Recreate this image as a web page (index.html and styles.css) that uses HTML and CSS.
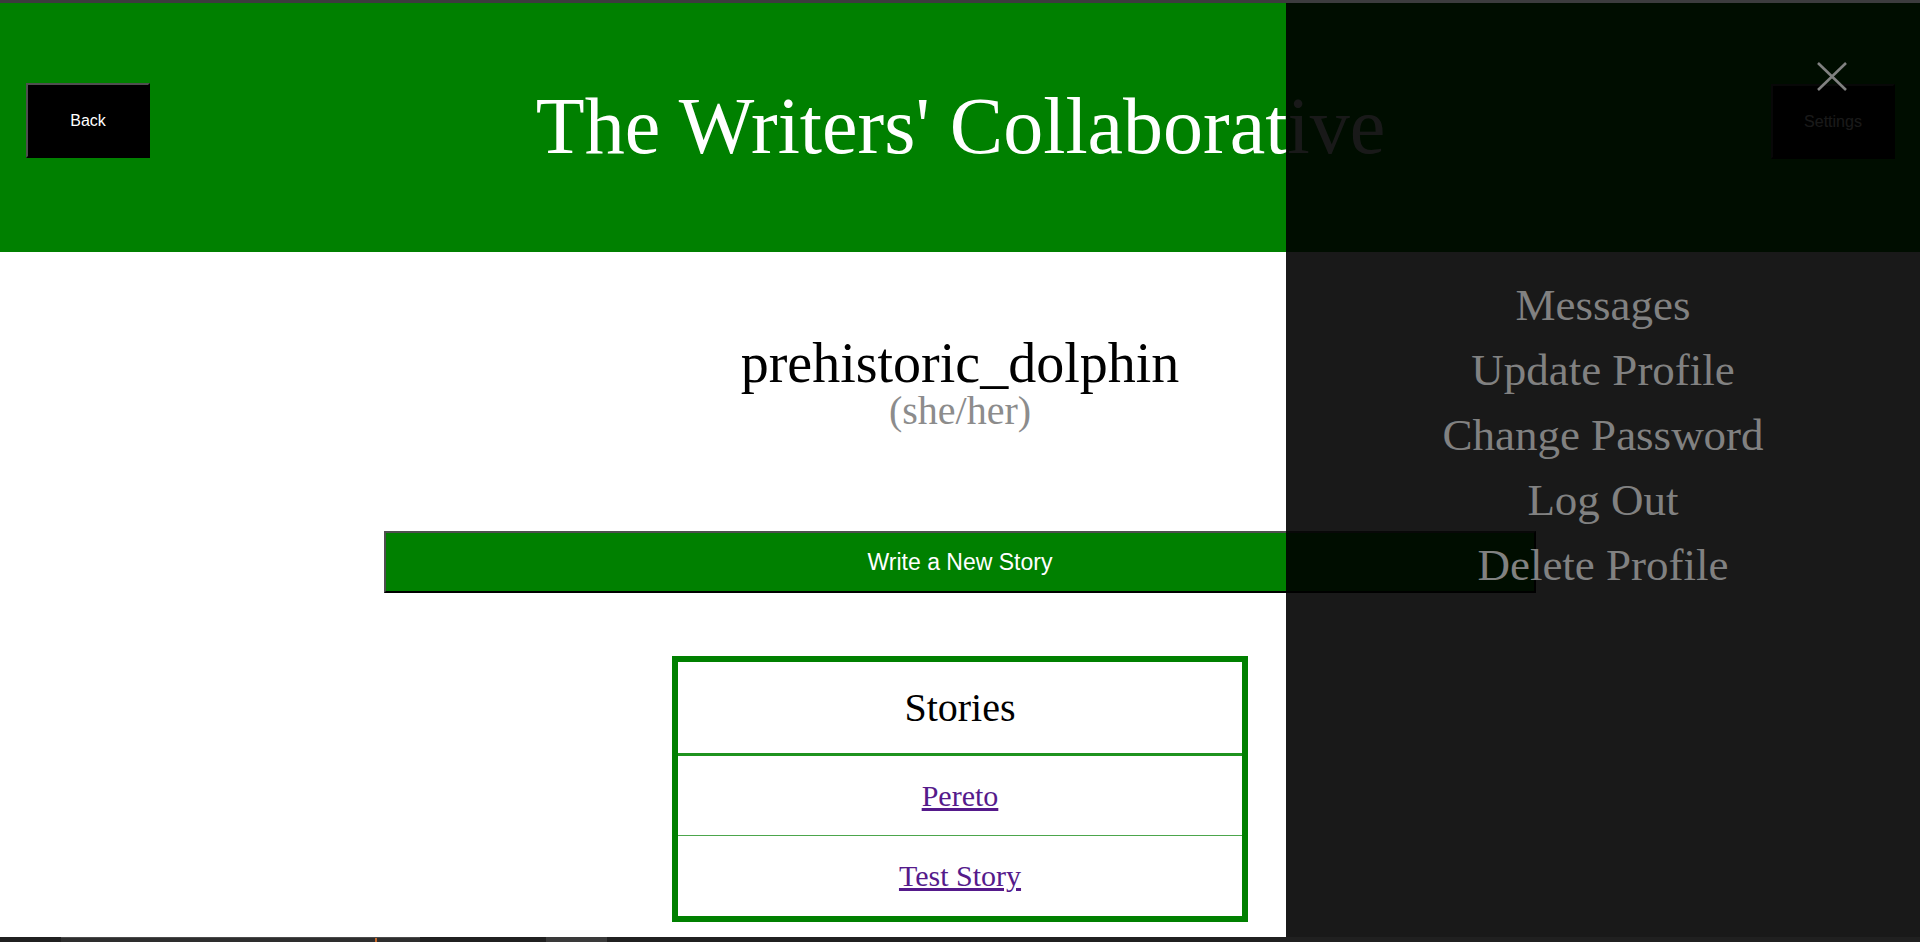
FILE: index.html
```html
<!DOCTYPE html>
<html lang="en">
<head>
<meta charset="utf-8">
<title>The Writers' Collaborative</title>
<link rel="stylesheet" href="styles.css">
</head>
<body>
<div class="chrome-top"></div>
<div class="viewport">
  <header class="header">
    <button class="btn btn-back">Back</button>
    <h1 class="title">The Writers' Collaborative</h1>
    <button class="btn btn-settings">Settings</button>
  </header>
  <main class="main">
    <div class="profile">
      <div class="username">prehistoric_dolphin</div>
      <div class="pronouns">(she/her)</div>
    </div>
    <button class="write-btn">Write a New Story</button>
    <table class="stories">
      <thead>
        <tr><th class="stories-head">Stories</th></tr>
      </thead>
      <tbody>
        <tr><td class="story-cell story-first"><a class="story-link" href="#">Pereto</a></td></tr>
        <tr><td class="story-cell story-last"><a class="story-link" href="#">Test Story</a></td></tr>
      </tbody>
    </table>
  </main>
  <nav class="sidenav">
    <a class="close-btn" href="#" aria-label="Close">
      <svg class="close-icon" viewBox="0 0 30 29" width="30" height="29">
        <line x1="1" y1="1" x2="29" y2="28" stroke="#818181" stroke-width="2.6"/>
        <line x1="29" y1="1" x2="1" y2="28" stroke="#818181" stroke-width="2.6"/>
      </svg>
    </a>
    <a class="nav-link" href="#">Messages</a>
    <a class="nav-link" href="#">Update Profile</a>
    <a class="nav-link" href="#">Change Password</a>
    <a class="nav-link" href="#">Log Out</a>
    <a class="nav-link" href="#">Delete Profile</a>
  </nav>
</div>
<div class="taskbar">
  <div class="task-gap-a"></div>
  <div class="task-item"><span class="task-mark"></span></div>
  <div class="task-gap-b"></div>
  <div class="task-small"></div>
</div>
</body>
</html>
```

FILE: styles.css
```css
html, body {
  margin: 0;
  padding: 0;
}

body {
  width: 1920px;
  height: 942px;
  overflow: hidden;
  background: #ffffff;
  font-family: "Liberation Serif", "Times New Roman", serif;
  display: flex;
  flex-direction: column;
}

.chrome-top {
  height: 3px;
  flex: none;
  background: #3c3c3e;
}

.viewport {
  position: relative;
  height: 934px;
  flex: none;
  overflow: hidden;
  background: #ffffff;
}

.header {
  height: 249px;
  background: #008000;
  display: grid;
  grid-template-columns: 1fr auto 1fr;
  align-items: center;
  padding: 0 25px 0 26px;
}

.btn {
  width: 124px;
  height: 75px;
  box-sizing: border-box;
  background: #000000;
  color: #ffffff;
  font-family: "Liberation Sans", Arial, sans-serif;
  font-size: 16px;
  border-style: solid;
  border-width: 2px;
  border-color: #4f4f4f #000000 #000000 #4f4f4f;
  padding: 0;
  align-self: start;
  margin-top: 80px;
}

.btn-back {
  justify-self: start;
}

.btn-settings {
  justify-self: end;
  margin-top: 81px;
}

.title {
  margin: 0 0 2px 0;
  font-size: 80px;
  font-weight: normal;
  color: #ffffff;
  line-height: normal;
  white-space: nowrap;
}

.main {
  display: flex;
  flex-direction: column;
  align-items: center;
}

.profile {
  margin-top: 83px;
  display: flex;
  flex-direction: column;
  align-items: center;
}

.username {
  font-size: 56px;
  line-height: 56px;
  color: #000000;
}

.pronouns {
  font-size: 40px;
  line-height: 40px;
  color: #8c8c8c;
}

.write-btn {
  margin-top: 100px;
  width: 1152px;
  height: 62px;
  box-sizing: border-box;
  background: #008000;
  color: #ffffff;
  font-family: "Liberation Sans", Arial, sans-serif;
  font-size: 23px;
  border-style: solid;
  border-width: 2px;
  border-color: #4f4f4f #000000 #000000 #4f4f4f;
  padding: 0;
}

.stories {
  margin-top: 63px;
  width: 576px;
  border: 6px solid #008000;
  border-collapse: separate;
  border-spacing: 0;
}

.stories-head {
  height: 91px;
  padding: 0;
  font-size: 40px;
  font-weight: normal;
  color: #000000;
  text-align: center;
  border-bottom: 3px solid #1f931f;
}

.story-cell {
  padding: 0;
  text-align: center;
  font-size: 30px;
}

.story-first {
  height: 79px;
  border-bottom: 1px solid #4ca64c;
}

.story-last {
  height: 80px;
}

.story-link {
  color: #551a8b;
  text-decoration: underline;
}

.sidenav {
  position: absolute;
  top: 0;
  right: 0;
  width: 634px;
  height: 100%;
  background: rgba(0, 0, 0, 0.9);
  padding-top: 270px;
  box-sizing: border-box;
  display: flex;
  flex-direction: column;
}

.close-btn {
  position: absolute;
  top: 59px;
  right: 73px;
  width: 30px;
  height: 29px;
  display: block;
}

.close-icon {
  display: block;
}

.nav-link {
  display: block;
  text-align: center;
  font-size: 45px;
  line-height: 65px;
  color: #818181;
  text-decoration: none;
}

.taskbar {
  height: 5px;
  flex: none;
  background: #202020;
  display: flex;
}

.task-gap-a {
  width: 61px;
}

.task-item {
  width: 359px;
  background: #2e2e2e;
  border-top: 1px solid #4a4a4a;
  position: relative;
}

.task-mark {
  position: absolute;
  left: 314px;
  top: 0;
  width: 2px;
  height: 4px;
  background: #c8692a;
}

.task-gap-b {
  width: 126px;
}

.task-small {
  width: 61px;
  background: #3a3a3a;
}
```
